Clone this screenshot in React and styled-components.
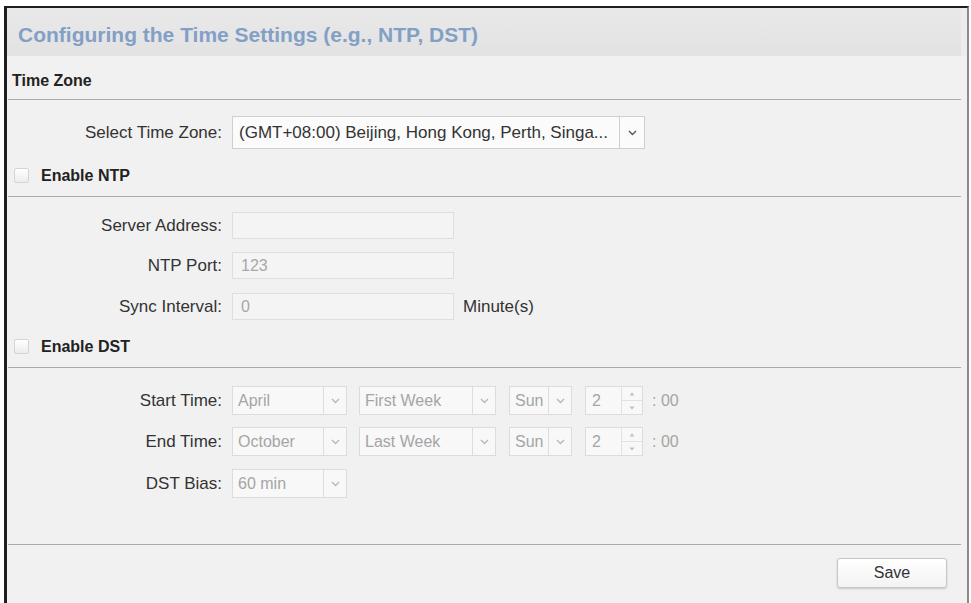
import React from 'react';
import styled, { createGlobalStyle } from 'styled-components';

const GlobalStyle = createGlobalStyle`
  html, body {
    margin: 0;
    padding: 0;
    background: #ffffff;
    font-family: "Liberation Sans", Arial, sans-serif;
    overflow: hidden;
  }
`;

const Page = styled.div`
  width: 971px;
  height: 603px;
  padding: 6px 2px 0 4px;
  box-sizing: border-box;
  overflow: hidden;
`;

const Frame = styled.div`
  height: 640px;
  border-top: 2px solid #1e1e1e;
  border-left: 3px solid #1e1e1e;
  border-right: 2px solid #8a8a8a;
  background: #f1f1f1;
  display: flex;
  flex-direction: column;
`;

const Header = styled.div`
  height: 48px;
  box-sizing: border-box;
  display: flex;
  align-items: center;
  padding: 6px 0 0 11px;
  background: linear-gradient(to bottom, #e9e9e9, #e2e2e2);
  border-right: 6px solid #ececec;
`;

const Title = styled.h1`
  margin: 0;
  font-size: 21px;
  font-weight: bold;
  color: #82a0c6;
`;

const SectionHead = styled.div`
  display: flex;
  align-items: center;
  gap: 12px;
  height: ${p => p.$h}px;
  padding: ${p => p.$pt}px 0 0 ${p => p.$pl}px;
  box-sizing: border-box;
  margin: 0 6px 0 1px;
  border-bottom: 1px solid #a9a9a9;
  font-size: ${p => p.$fs || 16}px;
  font-weight: bold;
  color: #222;
`;

const Check = styled.span`
  width: 13px;
  height: 13px;
  border: 1px solid #d4d4d4;
  border-radius: 2px;
  background: linear-gradient(to bottom, #ffffff, #ececec);
`;

const Row = styled.div`
  display: flex;
  align-items: center;
  height: ${p => p.$h || 27}px;
  margin-top: ${p => p.$mt || 0}px;
`;

const Label = styled.label`
  width: 215px;
  padding-right: 10px;
  text-align: right;
  font-size: 17px;
  color: #333;
  white-space: nowrap;
`;

const Field = styled.div`
  width: ${p => p.$w}px;
  height: 100%;
  box-sizing: border-box;
  display: flex;
  align-items: center;
  padding-left: 8px;
  background: #f4f4f4;
  border: 1px solid #dedede;
  font-size: 16px;
  color: #a8a8a8;
`;

const Unit = styled.span`
  margin-left: 9px;
  font-size: 17px;
  color: #333;
`;

const Select = styled.div`
  width: ${p => p.$w}px;
  height: 100%;
  box-sizing: border-box;
  display: flex;
  margin-right: ${p => p.$mr || 0}px;
  background: ${p => (p.$on ? '#fbfbfb' : '#f8f8f8')};
  border: 1px solid ${p => (p.$on ? '#cfcfcf' : '#dcdcdc')};
  color: ${p => (p.$on ? '#333' : '#a5a5a5')};
`;

const SelectText = styled.span`
  flex: 1;
  display: flex;
  align-items: center;
  padding-left: ${p => p.$pl || 5}px;
  font-size: ${p => p.$fs || 16}px;
  white-space: nowrap;
  overflow: hidden;
`;

const Arrow = styled.span`
  width: ${p => p.$w}px;
  display: flex;
  align-items: center;
  justify-content: center;
  border-left: 1px solid ${p => (p.$on ? '#cfcfcf' : '#dcdcdc')};
`;

const Spinner = styled.div`
  width: 58px;
  height: 100%;
  box-sizing: border-box;
  display: flex;
  background: #f8f8f8;
  border: 1px solid #dcdcdc;
  color: #a5a5a5;
  font-size: 16px;
`;

const SpinVal = styled.span`
  flex: 1;
  display: flex;
  align-items: center;
  padding-left: 6px;
`;

const SpinBtns = styled.span`
  width: 20px;
  display: flex;
  flex-direction: column;
  border-left: 1px solid #e2e2e2;
`;

const SpinBtn = styled.span`
  flex: 1;
  display: flex;
  align-items: center;
  justify-content: center;
  & + & {
    border-top: 1px solid #e2e2e2;
  }
`;

const Suffix = styled.span`
  margin-left: 9px;
  font-size: 16px;
  color: #a5a5a5;
`;

const Spacer = styled.div`
  height: ${p => p.$h}px;
`;

const Footer = styled.div`
  display: flex;
  justify-content: flex-end;
  padding: 13px 20px 0 0;
`;

const SaveButton = styled.button`
  width: 110px;
  height: 30px;
  border: 1px solid #c6c6c6;
  border-radius: 3px;
  background: linear-gradient(to bottom, #ffffff, #f3f3f3);
  box-shadow: 0 1px 2px rgba(0, 0, 0, 0.18);
  font-family: "Liberation Sans", Arial, sans-serif;
  font-size: 16px;
  color: #333;
`;

const Chevron = ({ color = '#aaa' }) => (
  <svg width="9" height="6" viewBox="0 0 9 6">
    <polyline points="1,1 4.5,4.5 8,1" fill="none" stroke={color} strokeWidth="1.4" />
  </svg>
);

const Tri = ({ up }) => (
  <svg width="6" height="4" viewBox="0 0 6 4">
    <polygon points={up ? '3,0.5 5.5,3.5 0.5,3.5' : '0.5,0.5 5.5,0.5 3,3.5'} fill="#bdbdbd" />
  </svg>
);

const DropDown = ({ w, mr, on, value, arrow = 22, fs, pl }) => (
  <Select $w={w} $mr={mr} $on={on}>
    <SelectText $fs={fs} $pl={pl}>{value}</SelectText>
    <Arrow $w={arrow} $on={on}>
      <Chevron color={on ? '#555' : '#b8b8b8'} />
    </Arrow>
  </Select>
);

const TimeRow = ({ label, month, week, mt }) => (
  <Row $h={29} $mt={mt}>
    <Label>{label}</Label>
    <DropDown w={115} mr={12} value={month} />
    <DropDown w={137} mr={13} value={week} />
    <DropDown w={63} mr={13} value="Sun" arrow={22} />
    <Spinner>
      <SpinVal>2</SpinVal>
      <SpinBtns>
        <SpinBtn><Tri up /></SpinBtn>
        <SpinBtn><Tri /></SpinBtn>
      </SpinBtns>
    </Spinner>
    <Suffix>: 00</Suffix>
  </Row>
);

export default function App() {
  return (
    <Page>
      <GlobalStyle />
      <Frame>
        <Header>
          <Title>Configuring the Time Settings (e.g., NTP, DST)</Title>
        </Header>

        <SectionHead $h={44} $pt={6} $pl={4} $fs={16}>Time Zone</SectionHead>

        <Row $h={33} $mt={16}>
          <Label>Select Time Zone:</Label>
          <DropDown
            w={413}
            on
            arrow={24}
            pl={6}
            fs={17}
            value="(GMT+08:00) Beijing, Hong Kong, Perth, Singa..."
          />
        </Row>

        <SectionHead $h={48} $pt={6} $pl={6}>
          <Check />
          Enable NTP
        </SectionHead>

        <Row $mt={15}>
          <Label>Server Address:</Label>
          <Field $w={222} />
        </Row>
        <Row $mt={13}>
          <Label>NTP Port:</Label>
          <Field $w={222}>123</Field>
        </Row>
        <Row $mt={14}>
          <Label>Sync Interval:</Label>
          <Field $w={222}>0</Field>
          <Unit>Minute(s)</Unit>
        </Row>

        <SectionHead $h={48} $pt={6} $pl={6}>
          <Check />
          Enable DST
        </SectionHead>

        <TimeRow label="Start Time:" month="April" week="First Week" mt={18} />
        <TimeRow label="End Time:" month="October" week="Last Week" mt={12} />
        <Row $h={29} $mt={13}>
          <Label>DST Bias:</Label>
          <DropDown w={115} value="60 min" />
        </Row>

        <Spacer $h={46} />
        <SectionHead $h={1} $pt={0} $pl={0} />

        <Footer>
          <SaveButton>Save</SaveButton>
        </Footer>
      </Frame>
    </Page>
  );
}
